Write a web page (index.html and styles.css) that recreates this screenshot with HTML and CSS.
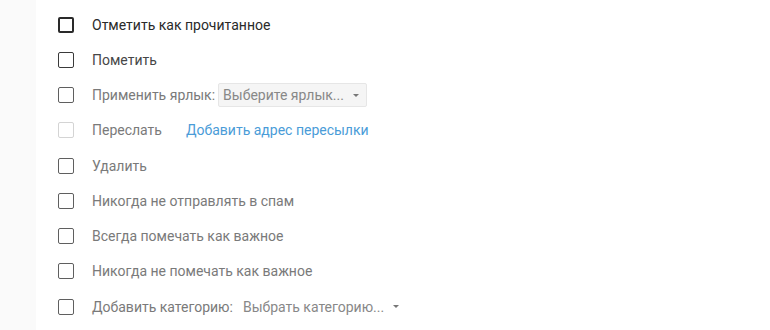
FILE: index.html
```html
<!DOCTYPE html>
<html lang="ru">
<head>
    <meta charset="UTF-8">
    <meta name="viewport" content="width=device-width, initial-scale=1.0">
    <title>Фильтр</title>
    <link rel="stylesheet" href="styles.css">
</head>
<body>
    <div class="page">
        <div class="side"></div>
        <div class="filter-actions">
            <label class="action primary">
                <span class="box"></span>
                <span class="text">Отметить как прочитанное</span>
            </label>
            <label class="action secondary">
                <span class="box"></span>
                <span class="text">Пометить</span>
            </label>
            <label class="action">
                <span class="box"></span>
                <span class="text">Применить ярлык:</span>
                <span class="select">Выберите ярлык...<span class="caret"></span></span>
            </label>
            <label class="action disabled">
                <span class="box"></span>
                <span class="text">Переслать</span>
                <a class="link" href="#">Добавить адрес пересылки</a>
            </label>
            <label class="action">
                <span class="box"></span>
                <span class="text">Удалить</span>
            </label>
            <label class="action">
                <span class="box"></span>
                <span class="text">Никогда не отправлять в спам</span>
            </label>
            <label class="action">
                <span class="box"></span>
                <span class="text">Всегда помечать как важное</span>
            </label>
            <label class="action">
                <span class="box"></span>
                <span class="text">Никогда не помечать как важное</span>
            </label>
            <label class="action">
                <span class="box"></span>
                <span class="text">Добавить категорию:</span>
                <span class="select plain">Выбрать категорию...<span class="caret"></span></span>
            </label>
        </div>
    </div>
</body>
</html>
```

FILE: styles.css
```css
body {
    margin: 0;
    background: #fff;
    font-family: Roboto, "Liberation Sans", Arial, sans-serif;
    font-size: 14px;
    color: #7a7a7a;
}

.page {
    display: flex;
    height: 330px;
    overflow: hidden;
}

.side {
    width: 36px;
    flex-shrink: 0;
    background: #fafafa;
}

.filter-actions {
    display: flex;
    flex-direction: column;
    padding-top: 7px;
    padding-left: 22px;
}

.action {
    display: flex;
    align-items: center;
    height: 35.25px;
    cursor: pointer;
}

.box {
    box-sizing: border-box;
    width: 16px;
    height: 16px;
    border: 1.5px solid #5f5f5f;
    border-radius: 2px;
    margin-right: 18px;
    flex-shrink: 0;
}

.primary .box {
    border: 2px solid #2a2a2a;
}

.primary .text {
    color: #2a2a2a;
}

.secondary .box {
    border-color: #3a3a3a;
    border-width: 1.8px;
}

.secondary .text {
    color: #474747;
}

.disabled .box {
    border-color: #d4d4d4;
    border-width: 1px;
}

.link {
    color: #4a9cd8;
    text-decoration: none;
    margin-left: 24px;
}

.select {
    display: flex;
    align-items: center;
    height: 22px;
    margin-left: 3px;
    padding: 0 7px 0 4px;
    background: #f5f5f5;
    border: 1px solid #e6e6e6;
    border-radius: 2px;
    color: #888;
}

.select.plain {
    background: #fff;
    border-color: #fff;
    margin-left: 5px;
}

.caret {
    width: 0;
    height: 0;
    border-left: 3px solid transparent;
    border-right: 3px solid transparent;
    border-top: 3px solid #777;
    margin-left: 9px;
}
```
